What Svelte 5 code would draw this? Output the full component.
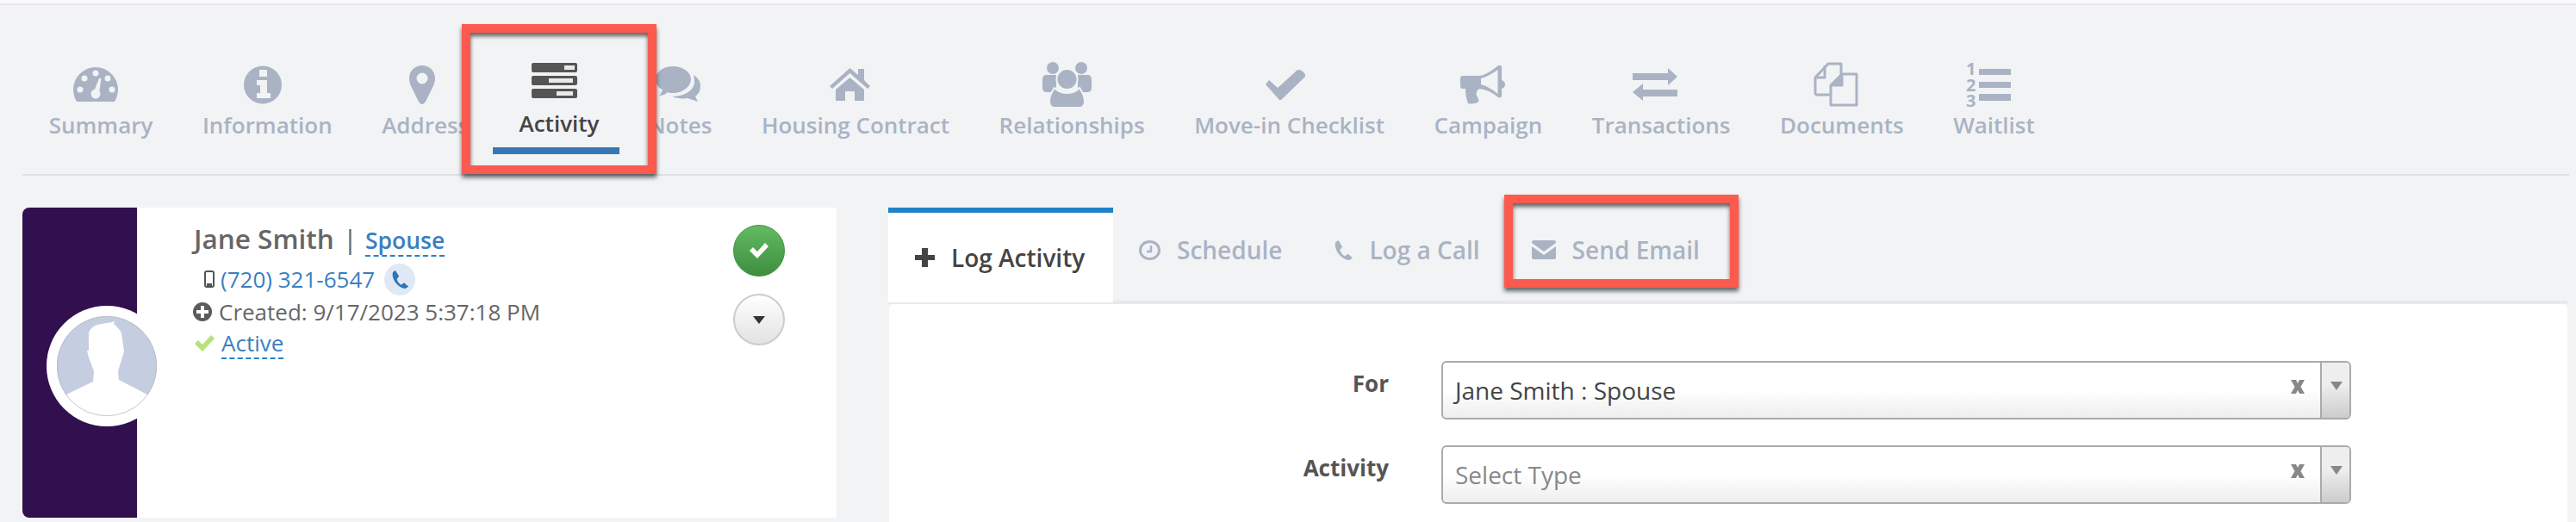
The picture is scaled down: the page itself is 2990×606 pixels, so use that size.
<script>
  const bg = '#f2f3f5';

  // dx: the reference's icons sit a little left of their label's centre
  const navItems = [
    { label: 'Summary', w: 52, h: 40, dx: -6, body: `<path d="M4 40C1 35 0 30 0 26 0 12 12 0 26 0s26 12 26 26c0 4-1 9-4 14z"/><g fill="${bg}"><circle cx="26" cy="7" r="3.500"/><circle cx="13" cy="13" r="3.500"/><circle cx="40" cy="13" r="3.500"/><circle cx="8" cy="26" r="3.500"/><circle cx="45" cy="26" r="3.500"/><circle cx="26" cy="31" r="5.500"/><path d="M24 28l6-15h2.500l-2.500 17z"/></g>` },
    { label: 'Information', w: 44, h: 45, dx: -5, body: `<circle cx="22" cy="22.500" r="22"/><path fill="${bg}" d="M18 5h9v8h-9zM15 17h12v15h4v6H15v-6h4v-9h-4z"/>` },
    { label: 'Address', w: 30, h: 45, dx: -4, body: `<path fill-rule="evenodd" d="M15 0c8.500 0 15 6.500 15 15 0 7-5 14-8 21-2 4-4 9-7 9s-5-5-7-9C5 29 0 22 0 15 0 6.500 6.500 0 15 0zm0 8.500a6.500 6.500 0 1 0 0 13 6.500 6.500 0 0 0 0-13z"/>` },
    { label: 'Activity', w: 53, h: 41, dx: 0, body: '' },
    { label: 'Notes', w: 52, h: 42, dx: -2, body: `<path d="M20 0c12 0 21 7 21 15s-9 16-21 16c-2 0-4 0-6-1-3 3-7 4-10 4 2-2 3-4 4-7C3 25 0 20 0 15 0 7 8 0 20 0z"/><path d="M44 10c5 3 8 8 8 12 0 6-2 10-6 13l3 6-12-4c-6 1-13 0-18-2 13 0 24-6 26-15 0-4 0-7-1-10z"/>` },
    { label: 'Housing Contract', w: 47, h: 39, dx: -6, body: `<path d="M23.500 0L33 8V1h7v13l7 7-3 3L23.500 6 3 24l-3-3z"/><path d="M23.500 11L40 25v12c0 1-1 1-1 1H29V27H18v11H8s-1 0-1-1V25z"/>` },
    { label: 'Relationships', w: 57, h: 52, dx: -6, body: `<circle cx="12" cy="7" r="7"/><circle cx="45" cy="7" r="7"/><path d="M3 15h13v20H5c-3 0-5-2-5-5V20c0-2 1-4 3-5zM54 15H41v20h11c3 0 5-2 5-5V20c0-2-1-4-3-5z"/><circle cx="28.500" cy="20" r="12" stroke="${bg}" stroke-width="2"/><path stroke="${bg}" stroke-width="2" d="M8 46c0-8 4-13 6-16 4 4 9 6 14.500 6s10.500-2 14.500-6c2 3 6 8 6 16 0 3-2 7-5 7H13c-3 0-5-4-5-7z"/>` },
    { label: 'Move-in Checklist', w: 46, h: 35, dx: -5, body: `<path d="M0 17l4-5 10 9L36 1c2-2 4-1 7 1s4 5 2 7L18 35h-2z"/>` },
    { label: 'Campaign', w: 52, h: 45, dx: -6, body: `<path d="M3 12h19C30 11 38 5 44 0c2-1 4 0 4 2v15c3 1 4 3 4 5s-1 4-4 5v8c0 2-2 3-4 2-6-5-13-9-22-10-3 2-4 5-3 8 1 2 3 4 2 7-1 2-9 3-12 2-2-5-3-11-3-17H3c-2 0-3-1-3-3V15c0-2 1-3 3-3z"/><path fill="${bg}" d="M24 15c7-2 14-6 19.500-10v28C38 28 31 24 24 22z"/>` },
    { label: 'Transactions', w: 52, h: 38, dx: -7, body: `<path d="M0 6h41V0l11 10-11 10v-6H0zM52 25H12v-7L0 28l12 10v-5h40z"/>` },
    { label: 'Documents', w: 52, h: 52, dx: -7, body: `<g fill="none" stroke="currentColor" stroke-width="3" stroke-linejoin="round"><path d="M2 38V18L17 2h15v14M2 38h18"/><path d="M2 18h11V4"/><path fill="${bg}" d="M20 50V27l13-13h17v36z"/><path fill="currentColor" d="M22 27h11V16z"/></g>` },
    { label: 'Waitlist', w: 53, h: 52, dx: -6, body: `<path d="M15 8h37v7H15zM15 23h37v7H15zM15 37h37v8H15z"/><g font-family="Open Sans" font-weight="700" font-size="20" fill="currentColor"><text x="0" y="15">1</text><text x="0" y="34">2</text><text x="0" y="52">3</text></g>` }
  ];

  const phonePath = 'M6 0L11 8 8 12c1 4 3 6 6 8l4-3 6 5c-1 1-3 3-5 3C10 24 1 13 2 4c0-2 2-3 4-4z';
  const clearPath = 'M0 0h6l2 4 2-4h6l-4.500 8 4.500 8h-6l-2-4-2 4H0l4.500-8z';
</script>

<div class="page">
  <div class="top-strip"></div>

  <nav class="nav">
    {#each navItems as item}
      <div class="nav-item">
        <span class="nav-icon" style="transform: translateX({item.dx}px)">
          {#if item.body}
            <svg width={item.w} height={item.h} viewBox="0 0 {item.w} {item.h}" fill="currentColor">{@html item.body}</svg>
          {/if}
        </span>
        <span>{item.label}</span>
      </div>
    {/each}
  </nav>

  <div class="main">
    <section class="card">
      <div class="strip"></div>
      <div class="avatar">
        <svg width="116" height="116" viewBox="0 0 116 116">
          <defs><clipPath id="av"><circle cx="58" cy="58" r="58" /></clipPath></defs>
          <circle cx="58" cy="58" r="58" fill="#c5cde0" />
          <g clip-path="url(#av)">
            <path fill="#fff" d="M67 6C58 9 50 8 45 11c-5 2-8 6-8 10v19h-2l2 8 6 16-1 12-31 15 9 25h80l5-25-33-17-1-10 7-23-3-21c-2-5-6-8-9-11z" />
          </g>
          <circle cx="58" cy="58" r="57.700" fill="none" stroke="#b5b5bd" stroke-width="0.700" />
        </svg>
      </div>

      <div class="info">
        <div class="name-row">
          <span class="name">Jane Smith</span>
          <span class="sep">|</span>
          <a class="dashed spouse" href="#spouse">Spouse</a>
        </div>
        <div class="phone-row">
          <svg class="mobile" width="12" height="20" viewBox="0 0 12 20"><rect x="1" y="1" width="10" height="18" rx="2" fill="none" stroke="#555" stroke-width="2" /><rect x="3" y="15" width="6" height="3" fill="#555" /></svg>
          <a class="link" href="#phone">(720) 321-6547</a>
          <span class="call">
            <svg width="20" height="25" viewBox="0 0 24 25"><path fill="#2f75b5" d={phonePath} /></svg>
          </span>
        </div>
        <div class="row">
          <svg width="22" height="22" viewBox="0 0 22 22"><circle cx="11" cy="11" r="11" fill="#5c5c5c" /><path fill="#fff" d="M9 4h4v5h5v4h-5v5H9v-5H4V9h5z" /></svg>
          <span>Created: 9/17/2023 5:37:18 PM</span>
        </div>
        <div class="row active-row">
          <svg width="23" height="19" viewBox="0 0 23 19"><path fill="#b5e27a" d="M0 10l4-4 5 5L19 0l4 4L9 19z" /></svg>
          <a class="dashed" href="#active">Active</a>
        </div>
      </div>

      <div class="actions">
        <button class="round green" aria-label="Confirm">
          <svg width="22" height="18" viewBox="0 0 22 18"><path fill="#fff" d="M0 9l4-4 5 5L18 0l4 4L9 18z" /></svg>
        </button>
        <button class="round plain" aria-label="More">
          <svg width="14" height="9" viewBox="0 0 14 9"><path fill="#333" d="M0 0h14L7 9z" /></svg>
        </button>
      </div>
    </section>

    <section class="work">
      <div class="tabs">
        <div class="tab selected">
          <svg width="23" height="22" viewBox="0 0 23 22"><path fill="#444" d="M8 0h7v8h8v6h-8v8H8v-8H0V8h8z" /></svg>
          <span>Log Activity</span>
        </div>
        <div class="tab">
          <svg width="25" height="23" viewBox="0 0 25 23"><ellipse cx="12.500" cy="11.500" rx="11" ry="10" fill="none" stroke="currentColor" stroke-width="3" /><path fill="none" stroke="currentColor" stroke-width="2.500" d="M14 6v7H9" /></svg>
          <span>Schedule</span>
        </div>
        <div class="tab">
          <svg width="22" height="23" viewBox="0 0 24 25"><path fill="currentColor" d={phonePath} /></svg>
          <span>Log a Call</span>
        </div>
        <div class="tab">
          <svg width="28" height="22" viewBox="0 0 28 22"><path fill="currentColor" d="M0 2c0-1 1-2 2-2h24c1 0 2 1 2 2v1L14 13 0 3zM0 7l14 10L28 7v13c0 1-1 2-2 2H2c-1 0-2-1-2-2z" /></svg>
          <span>Send Email</span>
        </div>
      </div>

      <div class="panel">
        <div class="form">
          <div class="field-label">For</div>
          <div class="select">
            <span class="value">Jane Smith : Spouse</span>
            <svg class="clear" width="16" height="16" viewBox="0 0 16 16"><path fill="#888" d={clearPath} /></svg>
            <span class="arrow"><svg width="14" height="10" viewBox="0 0 14 10"><path fill="#888" d="M0 0h14L7 10z" /></svg></span>
          </div>
          <div class="field-label">Activity</div>
          <div class="select">
            <span class="value placeholder">Select Type</span>
            <svg class="clear" width="16" height="16" viewBox="0 0 16 16"><path fill="#888" d={clearPath} /></svg>
            <span class="arrow"><svg width="14" height="10" viewBox="0 0 14 10"><path fill="#888" d="M0 0h14L7 10z" /></svg></span>
          </div>
        </div>
      </div>
    </section>
  </div>

  <!-- pasted callouts -->
  <div class="callout activity-callout">
    <svg class="callout-icon" width="53" height="41" viewBox="0 0 53 41">
      <rect width="53" height="11" rx="2" fill="#555" />
      <rect y="15" width="53" height="11" rx="2" fill="#555" />
      <rect y="30" width="53" height="11" rx="2" fill="#555" />
      <path fill="#e8e9eb" d="M38 3h12v5H38zM20 18h28v5H20zM29 33h19v5H29z" />
    </svg>
    <span class="callout-label">Activity</span>
    <span class="callout-bar"></span>
  </div>
  <div class="callout email-callout"></div>
</div>

<style>
  :global(body) {
    margin: 0;
    background: #f2f3f5;
  }

  .page {
    position: relative;
    width: 2990px;
    height: 606px;
    overflow: hidden;
    background: #f2f3f5;
    font-family: "Open Sans", sans-serif;
    font-size: 26px;
    color: #666;
  }

  .top-strip {
    height: 4px;
    background: #fafafb;
    border-bottom: 2px solid #e8e8ea;
  }

  .nav {
    display: flex;
    margin: 0 8px 0 26px;
    padding: 65px 0 0 2px;
    height: 131px;
    border-bottom: 2px solid #dfe0e3;
    color: #a9b3c4;
    font-weight: 600;
    line-height: 40px;
  }

  .nav-item {
    display: flex;
    flex-direction: column;
    align-items: center;
    padding: 0 28.750px;
    white-space: nowrap;
  }

  .nav-icon {
    display: flex;
    align-items: center;
    justify-content: center;
    height: 54px;
  }

  .main {
    display: flex;
    gap: 60px;
    margin: 37px 10px 0 26px;
  }

  .card {
    position: relative;
    display: flex;
    width: 945px;
    height: 360px;
    flex: none;
    background: #fff;
    border-radius: 8px 0 0 8px;
  }

  .strip {
    width: 133px;
    flex: none;
    background: #32104f;
    border-radius: 8px 0 0 8px;
  }

  .avatar {
    position: absolute;
    left: 28px;
    top: 114px;
    display: flex;
    padding: 12px;
    background: #fff;
    border-radius: 50%;
  }

  .info {
    flex: 1;
    padding: 14px 0 0 63px;
    line-height: 38px;
  }

  .name-row {
    height: 50px;
    padding-left: 3px;
    display: flex;
    align-items: baseline;
    white-space: nowrap;
  }

  .name {
    font-size: 31.500px;
    font-weight: 600;
    line-height: 44px;
  }

  .sep {
    margin: 0 9px 0 10px;
    font-size: 31.500px;
  }

  .spouse {
    font-size: 26.500px;
    font-weight: 600;
  }

  .dashed {
    color: #3a7fc1;
    text-decoration: none;
    border-bottom: 2px dashed #2a80c0;
    line-height: 34px;
  }

  .phone-row {
    display: flex;
    align-items: center;
    height: 38px;
    padding-left: 15px;
    gap: 7px;
  }

  .link {
    color: #3a7fc1;
    text-decoration: none;
  }

  .call {
    display: flex;
    align-items: center;
    justify-content: center;
    width: 36px;
    height: 37px;
    margin-left: 4px;
    border-radius: 50%;
    background: #dfe9f5;
  }

  .row {
    display: flex;
    align-items: center;
    height: 37px;
    padding-left: 2px;
    gap: 8px;
    white-space: nowrap;
  }

  .active-row {
    padding-left: 4px;
  }

  .actions {
    display: flex;
    flex-direction: column;
    gap: 20px;
    padding: 20px 60px 0 0;
  }

  .round {
    display: flex;
    align-items: center;
    justify-content: center;
    width: 60px;
    height: 60px;
    padding: 0;
    border-radius: 50%;
  }

  .green {
    border: 1px solid #3e8e3e;
    background: linear-gradient(#62bb62, #3e8e3e);
  }

  .plain {
    border: 2px solid #ccc;
    background: linear-gradient(#fff, #e2e2e2);
  }

  .work {
    flex: 1;
    min-width: 0;
  }

  .tabs {
    display: flex;
    height: 108px;
    border-bottom: 4px solid #e9e9eb;
    color: #a9b3c4;
    font-size: 28px;
    font-weight: 600;
  }

  .tab {
    display: flex;
    align-items: center;
    height: 40px;
    gap: 19px;
    padding: 29px 30px 0;
    white-space: nowrap;
  }

  .selected {
    width: 261px;
    box-sizing: border-box;
    height: 110px;
    padding: 0 0 0 31px;
    border-top: 6px solid #2180c8;
    background: #fff;
    color: #444;
  }

  .panel {
    margin-left: 1px;
    height: 300px;
    background: #fff;
    border-radius: 6px 6px 0 0;
  }

  .form {
    display: grid;
    grid-template-columns: 580px 1056px;
    column-gap: 61px;
    row-gap: 30px;
    padding-top: 66px;
  }

  .field-label {
    padding-top: 6px;
    line-height: 40px;
    text-align: right;
    font-weight: 700;
    color: #555;
  }

  .select {
    display: flex;
    box-sizing: border-box;
    height: 68px;
    border: 2px solid #aaa;
    border-radius: 6px;
    background: linear-gradient(#fff 50%, #eee);
    overflow: hidden;
  }

  .value {
    flex: 1;
    padding-left: 14px;
    font-size: 28px;
    line-height: 65px;
    color: #444;
  }

  .placeholder {
    color: #888;
  }

  .clear {
    margin: 20px 18px 0 0;
  }

  .arrow {
    display: flex;
    width: 34px;
    box-sizing: border-box;
    padding: 22px 0 0 10px;
    border-left: 2px solid #aaa;
    background: linear-gradient(#eee 40%, #ccc);
  }

  .callout {
    position: absolute;
    box-sizing: border-box;
    border: 10px solid #fc5a4e;
    box-shadow: 0 4px 5px rgba(0, 0, 0, 0.6), inset 0 4px 5px rgba(0, 0, 0, 0.6);
  }

  .activity-callout {
    left: 536px;
    top: 28px;
    width: 226px;
    height: 174px;
    display: flex;
    flex-direction: column;
    align-items: center;
    padding-top: 35px;
    background: #f2f3f5;
    color: #444;
    font-weight: 600;
  }

  .callout-icon {
    margin-right: 12px;
  }

  .callout-label {
    margin-top: 9px;
    line-height: 40px;
  }

  .callout-bar {
    width: 147px;
    height: 8px;
    margin: 8px 7px 0 0;
    background: #3478b5;
  }

  .email-callout {
    left: 1746px;
    top: 226px;
    width: 272px;
    height: 108px;
  }
</style>
